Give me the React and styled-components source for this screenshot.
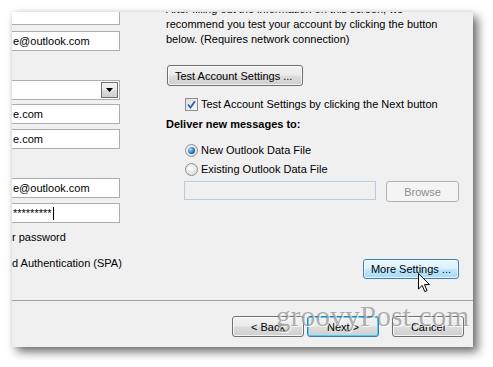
import React from "react";
import styled, { createGlobalStyle, css } from "styled-components";

const GlobalStyle = createGlobalStyle`
  html, body {
    margin: 0;
    padding: 0;
    background: #ffffff;
  }
  body {
    font-family: "Liberation Sans", Arial, sans-serif;
    font-size: 11px;
    color: #000;
  }
`;

const Page = styled.div`
  position: relative;
  width: 493px;
  height: 367px;
  overflow: hidden;
  background: #fff;
`;

const Dialog = styled.div`
  position: relative;
  margin: 12px 0 0 12px;
  width: 461px;
  height: 335px;
  background: #f0f0f0;
  overflow: hidden;
  display: flex;
  flex-direction: column;
  box-shadow: 5px 5px 9px rgba(0, 0, 0, 0.55), 0 0 5px rgba(0, 0, 0, 0.12);
`;

const Main = styled.div`
  display: flex;
  height: 288px;
`;

const LeftCol = styled.div`
  width: 164px;
  flex-shrink: 0;
  margin-left: -10px;
  margin-top: -7px;
  display: flex;
  flex-direction: column;
`;

const RightCol = styled.div`
  width: 293px;
  flex-shrink: 0;
  margin-top: -10px;
  display: flex;
  flex-direction: column;
`;

const TextBox = styled.div`
  box-sizing: border-box;
  width: 118px;
  height: 20px;
  margin-top: ${(p) => p.$gap || 0}px;
  border: 1px solid #abadb3;
  background: #fff;
  padding-left: 10px;
  display: flex;
  align-items: center;
  white-space: nowrap;
`;

const Caret = styled.span`
  display: inline-block;
  width: 1px;
  height: 13px;
  background: #000;
  margin-left: 1px;
`;

const DropButton = styled.span`
  box-sizing: border-box;
  width: 17px;
  height: 16px;
  margin-left: auto;
  margin-right: 1px;
  border: 1px solid #707070;
  background: linear-gradient(#f2f2f2 0%, #ebebeb 50%, #dddddd 51%, #cfcfcf 100%);
  display: flex;
  align-items: center;
  justify-content: center;
`;

const LeftLabel = styled.div`
  margin-top: ${(p) => p.$gap || 0}px;
  height: 16px;
  line-height: 16px;
  padding-left: 10px;
  white-space: nowrap;
`;

const Intro = styled.p`
  margin: 0;
  line-height: 15px;
`;

const Button = styled.button`
  box-sizing: border-box;
  width: ${(p) => p.$w}px;
  height: ${(p) => p.$h || 21}px;
  margin: 0;
  padding: 0;
  font-family: inherit;
  font-size: 11px;
  color: #000;
  border: 1px solid #707070;
  border-radius: 3px;
  background: linear-gradient(#f2f2f2 0%, #ebebeb 48%, #dddddd 52%, #cfcfcf 100%);
  box-shadow: inset 0 0 0 1px rgba(255, 255, 255, 0.75);
  ${(p) =>
    p.$hover &&
    css`
      border-color: #3c7fb1;
      background: linear-gradient(#eaf6fd 0%, #d9f0fc 48%, #bee6fd 52%, #a7d9f5 100%);
    `}
  ${(p) =>
    p.$default &&
    css`
      border-color: #3c7fb1;
      box-shadow: inset 0 0 0 1px #48d2f7;
    `}
  ${(p) =>
    p.$disabled &&
    css`
      color: #8d8d8d;
      border-color: #adb2b5;
      background: #f4f4f4;
      box-shadow: none;
    `}
`;

const TestButton = styled(Button)`
  margin-top: 18px;
  margin-left: 1px;
  text-align: left;
  padding-left: 7px;
`;

const CheckRow = styled.label`
  display: flex;
  align-items: center;
  gap: 3px;
  height: 16px;
  margin-top: ${(p) => p.$gap || 0}px;
  padding-left: 19px;
  white-space: nowrap;
`;

const Box = styled.span`
  box-sizing: border-box;
  width: 13px;
  height: 13px;
  border: 1px solid #8f8f8f;
  background: linear-gradient(135deg, #dcdcdc, #fbfbfb);
  display: flex;
  align-items: center;
  justify-content: center;
`;

const Radio = styled.span`
  box-sizing: border-box;
  width: 13px;
  height: 13px;
  border-radius: 50%;
  border: 1px solid #8e8f8f;
  background: radial-gradient(circle at 40% 40%, #fdfdfd, #d4d4d4);
  display: flex;
  align-items: center;
  justify-content: center;
  ${(p) =>
    p.$on &&
    css`
      &::after {
        content: "";
        width: 7px;
        height: 7px;
        border-radius: 50%;
        background: radial-gradient(circle at 35% 35%, #a9e0ff, #1b6fb5 60%, #0c3f74);
      }
    `}
`;

const Heading = styled.div`
  margin-top: 4px;
  height: 16px;
  line-height: 16px;
  font-weight: bold;
`;

const FileRow = styled.div`
  display: flex;
  align-items: flex-start;
  gap: 10px;
  margin-top: 4px;
  padding-left: 18px;
`;

const FileInput = styled.div`
  box-sizing: border-box;
  width: 192px;
  height: 19px;
  border: 1px solid #b5cde3;
  background: #f0f0f0;
`;

const MoreRow = styled.div`
  display: flex;
  justify-content: flex-end;
  margin-top: 57px;
`;

const Footer = styled.div`
  border-top: 1px solid #a0a0a0;
  flex: 1;
  display: flex;
  justify-content: flex-end;
  align-items: flex-start;
  padding: 15px 9px 0 0;
`;

const FooterButtons = styled.div`
  display: flex;
  gap: 3px;
  & > button:last-child {
    margin-left: 10px;
  }
`;

const Watermark = styled.div`
  position: absolute;
  left: 276px;
  top: 300px;
  font-family: "Liberation Serif", "Times New Roman", serif;
  font-size: 29px;
  letter-spacing: 0.3px;
  color: rgba(110, 110, 110, 0.55);
  text-shadow: 1px 1px 0 rgba(255, 255, 255, 0.8);
  pointer-events: none;
  white-space: nowrap;
`;

const Cursor = styled.svg`
  position: absolute;
  left: 418px;
  top: 273px;
`;

function Check() {
  return (
    <svg width="9" height="9" viewBox="0 0 9 9">
      <path d="M1 4.5 L3.5 7.5 L8 1.2" fill="none" stroke="#2a62b8" strokeWidth="1.8" />
    </svg>
  );
}

export default function App() {
  return (
    <>
      <GlobalStyle />
      <Page>
        <Dialog>
          <Main>
            <LeftCol>
              <TextBox />
              <TextBox $gap={6}>e@outlook.com</TextBox>
              <TextBox $gap={29}>
                <DropButton>
                  <svg width="7" height="4" viewBox="0 0 7 4">
                    <path d="M0 0 H7 L3.5 4 Z" fill="#000" />
                  </svg>
                </DropButton>
              </TextBox>
              <TextBox $gap={4}>e.com</TextBox>
              <TextBox $gap={5}>e.com</TextBox>
              <TextBox $gap={29}>e@outlook.com</TextBox>
              <TextBox $gap={5}>
                *********
                <Caret />
              </TextBox>
              <LeftLabel $gap={6}>r password</LeftLabel>
              <LeftLabel $gap={10}>d Authentication (SPA)</LeftLabel>
            </LeftCol>
            <RightCol>
              <Intro>
                After filling out the information on this screen, we
                <br />
                recommend you test your account by clicking the button
                <br />
                below. (Requires network connection)
              </Intro>
              <TestButton $w={136}>Test Account Settings ...</TestButton>
              <CheckRow $gap={10}>
                <Box>
                  <Check />
                </Box>
                Test Account Settings by clicking the Next button
              </CheckRow>
              <Heading>Deliver new messages to:</Heading>
              <CheckRow $gap={10}>
                <Radio $on />
                New Outlook Data File
              </CheckRow>
              <CheckRow $gap={3}>
                <Radio />
                Existing Outlook Data File
              </CheckRow>
              <FileRow>
                <FileInput />
                <Button $w={73} $disabled>
                  Browse
                </Button>
              </FileRow>
              <MoreRow>
                <Button $w={96} $h={20} $hover>
                  More Settings ...
                </Button>
              </MoreRow>
            </RightCol>
          </Main>
          <Footer>
            <FooterButtons>
              <Button $w={72} $h={21}>
                &lt; Back
              </Button>
              <Button $w={72} $h={21} $default>
                Next &gt;
              </Button>
              <Button $w={72} $h={21}>
                Cancel
              </Button>
            </FooterButtons>
          </Footer>
        </Dialog>
        <Watermark>groovyPost.com</Watermark>
        <Cursor width="13" height="20" viewBox="0 0 13 20">
          <path
            d="M0.5 0.5 L0.5 16 L4.2 12.4 L6.8 18.6 L9 17.6 L6.5 11.6 L11.5 11.6 Z"
            fill="#fff"
            stroke="#000"
            strokeWidth="1"
            strokeLinejoin="round"
          />
        </Cursor>
      </Page>
    </>
  );
}
